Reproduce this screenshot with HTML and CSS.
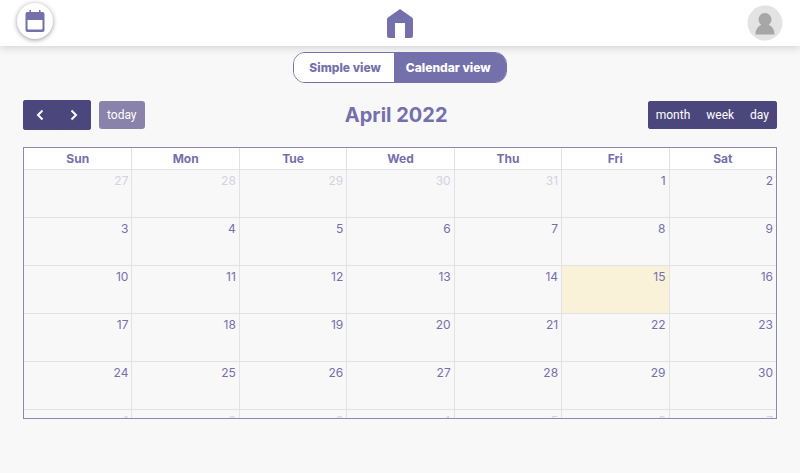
FILE: index.html
```
<!DOCTYPE html>
<html lang="en">
<head>
    <meta charset="UTF-8">
    <meta name="viewport" content="width=device-width, initial-scale=1.0">
    <title>Calendar</title>
    <link rel="stylesheet" href="styles.css">
</head>
<body>

    <!-- Top bar -->
    <header class="navbar">
        <a class="nav-calendar" href="#" aria-label="Calendar">
            <svg width="20" height="22" viewBox="0 0 20 22">
                <path fill="#7470ac" fill-rule="evenodd" d="M4.500 0h1.500V2h8V0h1.500V2h2A2 2 0 0 1 19.500 4v16a2 2 0 0 1-2 2h-15a2 2 0 0 1-2-2V4a2 2 0 0 1 2-2h2zM2.500 10v8.500a1 1 0 0 0 1 1h13a1 1 0 0 0 1-1V10z"/>
            </svg>
        </a>
        <a class="nav-home" href="#" aria-label="Home">
            <svg width="26" height="29" viewBox="0 0 26 29">
                <path fill="#7470ac" d="M13 0L25 8.500Q26 9.200 26 10.500V26.500A2.500 2.500 0 0 1 23.500 29H18V14H8V29H2.500A2.500 2.500 0 0 1 0 26.500V10.500Q0 9.200 1 8.500z"/>
            </svg>
        </a>
        <a class="nav-profile" href="#" aria-label="Profile">
            <svg width="36" height="36" viewBox="0 0 36 36">
                <circle cx="18" cy="18" r="17.500" fill="#e3e3e3"/>
                <circle cx="18" cy="14.500" r="6.500" fill="#a6a6a6"/>
                <path fill="#a6a6a6" d="M14 18h8v2c3.500 1.500 5.500 5 5.500 9.500h-19c0-4.500 2-8 5.500-9.500z"/>
            </svg>
        </a>
    </header>

    <main class="content">
        <div class="view-switch">
            <button type="button">Simple view</button>
            <button type="button" class="active">Calendar view</button>
        </div>

        <!-- Calendar toolbar -->
        <div class="toolbar">
            <div class="toolbar-left">
                <div class="btn-group">
                    <button type="button" class="btn btn-arrow" aria-label="Previous month">
                        <svg width="8" height="12" viewBox="0 0 8 12"><path d="M6.500 1.500L2 6L6.500 10.500"/></svg>
                    </button>
                    <button type="button" class="btn btn-arrow" aria-label="Next month">
                        <svg width="8" height="12" viewBox="0 0 8 12"><path d="M1.500 1.500L6 6L1.500 10.500"/></svg>
                    </button>
                </div>
                <button type="button" class="btn btn-today" disabled>today</button>
            </div>
            <h2>April 2022</h2>
            <div class="btn-group">
                <button type="button" class="btn">month</button>
                <button type="button" class="btn">week</button>
                <button type="button" class="btn">day</button>
            </div>
        </div>

        <!-- Month grid -->
        <div class="calendar">
            <table>
                <thead>
                    <tr><th>Sun</th><th>Mon</th><th>Tue</th><th>Wed</th><th>Thu</th><th>Fri</th><th>Sat</th></tr>
                </thead>
                <tbody>
                    <tr><td class="other">27</td><td class="other">28</td><td class="other">29</td><td class="other">30</td><td class="other">31</td><td>1</td><td>2</td></tr>
                    <tr><td>3</td><td>4</td><td>5</td><td>6</td><td>7</td><td>8</td><td>9</td></tr>
                    <tr><td>10</td><td>11</td><td>12</td><td>13</td><td>14</td><td class="today">15</td><td>16</td></tr>
                    <tr><td>17</td><td>18</td><td>19</td><td>20</td><td>21</td><td>22</td><td>23</td></tr>
                    <tr><td>24</td><td>25</td><td>26</td><td>27</td><td>28</td><td>29</td><td>30</td></tr>
                    <tr><td class="other">1</td><td class="other">2</td><td class="other">3</td><td class="other">4</td><td class="other">5</td><td class="other">6</td><td class="other">7</td></tr>
                </tbody>
            </table>
        </div>
    </main>

</body>
</html>
```

FILE: styles.css
```
* {
    box-sizing: border-box;
}

body {
    margin: 0;
    font-family: "Inter", sans-serif;
    font-size: 12px;
    color: #7470ac;
    background-color: #f8f8f8;
}

/* Top bar */
.navbar {
    display: grid;
    grid-template-columns: 1fr auto 1fr;
    align-items: center;
    height: 46px;
    padding: 0 17px;
    background-color: white;
    box-shadow: 0 2px 8px rgba(0, 0, 0, 0.15);
}

.navbar svg {
    display: block;
}

.nav-calendar {
    display: flex;
    align-items: center;
    justify-content: center;
    width: 36px;
    height: 36px;
    margin-bottom: 4px;
    border-radius: 50%;
    background-color: white;
    box-shadow: 0 1px 5px rgba(0, 0, 0, 0.4);
}

.nav-profile {
    justify-self: end;
}

.content {
    padding: 6px 23px 24px;
}

/* Simple / calendar switch */
.view-switch {
    display: flex;
    width: fit-content;
    margin: 0 auto;
    border: 1px solid #7470ac;
    border-radius: 12px;
    overflow: hidden;
    background-color: white;
}

.view-switch button {
    height: 29px;
    padding: 0 13px 0 15px;
    border: none;
    font: 800 12px "Inter", sans-serif;
    color: #7470ac;
    background-color: white;
}

.view-switch .active {
    padding: 0 15px 0 12px;
    color: white;
    background-color: #7470ac;
}

/* Toolbar */
.toolbar {
    display: flex;
    align-items: center;
    justify-content: space-between;
    margin: 17px 0;
}

.toolbar h2 {
    margin: 0;
    font-size: 20px;
    line-height: 28px;
}

.toolbar-left {
    display: flex;
    align-items: center;
    gap: 8px;
}

.btn-group {
    display: flex;
    border-radius: 3px;
    background-color: #4b467c;
}

.btn {
    height: 28px;
    padding: 0 8px;
    border: none;
    border-radius: 3px;
    font: 12px "Roboto", sans-serif;
    color: white;
    background-color: #4b467c;
}

.btn-arrow {
    width: 34px;
    height: 30px;
}

.btn-arrow svg {
    display: block;
    margin: 0 auto;
}

.btn-arrow path {
    fill: none;
    stroke: white;
    stroke-width: 2;
}

.btn-today {
    background-color: #8983ab;
}

/* Month grid */
.calendar {
    height: 272px;
    border: 1px solid #8d89ae;
    overflow: hidden;
}

table {
    width: 100%;
    table-layout: fixed;
    border-collapse: separate;
    border-spacing: 0;
}

th {
    height: 22px;
    padding: 0;
    border-bottom: 1px solid #e2e2e6;
    border-left: 1px solid #e2e2e6;
    background-color: white;
}

td {
    height: 48px;
    padding: 2px 3px 0;
    border-bottom: 1px solid #e2e2e6;
    border-left: 1px solid #e2e2e6;
    line-height: 18px;
    text-align: right;
    vertical-align: top;
}

th:first-child,
td:first-child {
    border-left: none;
}

.other {
    color: #d3d2e1;
}

.today {
    background-color: #f9f2d9;
}
```
